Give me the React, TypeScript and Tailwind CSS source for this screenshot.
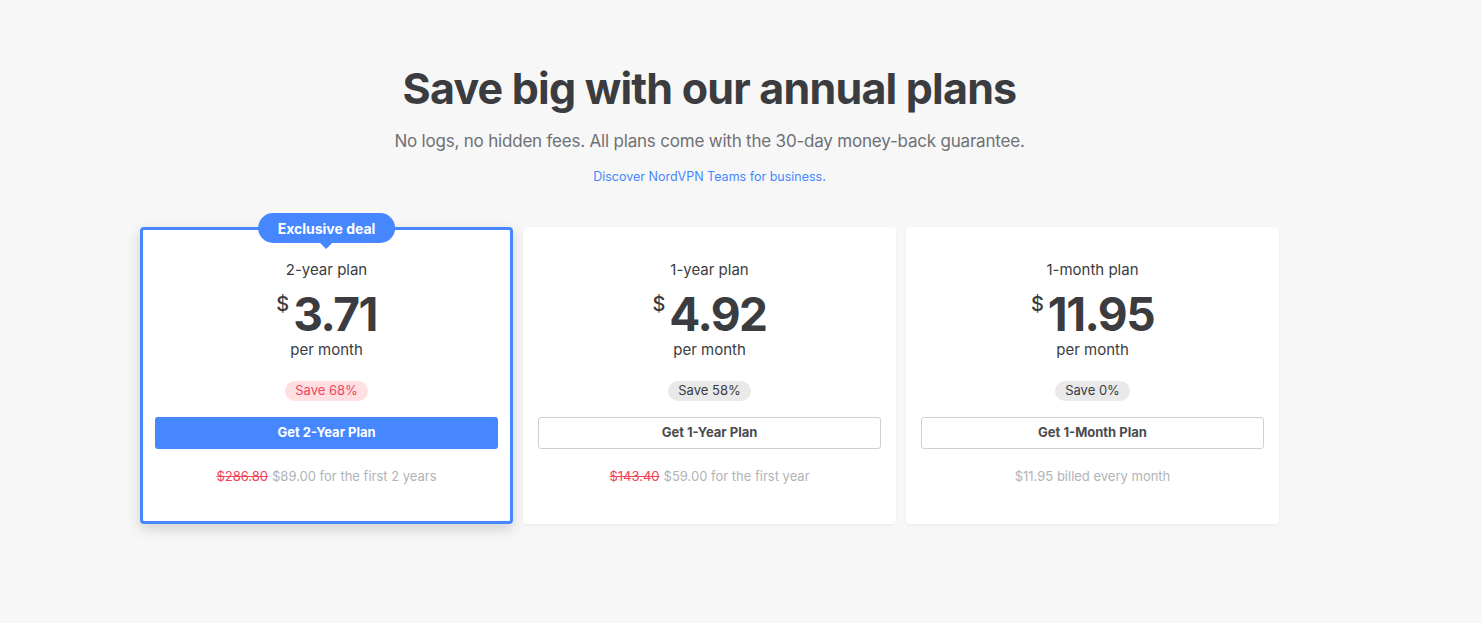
import React from "react";

type Plan = {
  name: string;
  price: string;
  save: string;
  cta: string;
  old?: string;
  rest: string;
  featured?: boolean;
};

const plans: Plan[] = [
  { name: "2-year plan", price: "3.71", save: "Save 68%", cta: "Get 2-Year Plan", old: "$286.80", rest: "$89.00 for the first 2 years", featured: true },
  { name: "1-year plan", price: "4.92", save: "Save 58%", cta: "Get 1-Year Plan", old: "$143.40", rest: "$59.00 for the first year" },
  { name: "1-month plan", price: "11.95", save: "Save 0%", cta: "Get 1-Month Plan", rest: "$11.95 billed every month" },
];

function Card({ p }: { p: Plan }) {
  return (
    <div
      className={
        "relative w-[373px] h-[297px] rounded-[4px] bg-white flex flex-col items-center " +
        (p.featured
          ? "border-[3px] border-[#4687ff] shadow-[0_5px_14px_rgba(0,0,0,0.16)] pt-[30px] px-[12px]"
          : "shadow-[0_1px_3px_rgba(0,0,0,0.06)] pt-[33px] px-[15px]")
      }
    >
      {p.featured && (
        <div className="absolute left-1/2 -translate-x-1/2 top-[-17px] flex flex-col items-center">
          <div className="h-[30px] px-[20px] rounded-full bg-[#4687ff] text-white text-[14px] font-bold flex items-center">
            Exclusive deal
          </div>
          <div className="w-0 h-0 border-l-[6px] border-r-[6px] border-t-[6px] border-l-transparent border-r-transparent border-t-[#4687ff]" />
        </div>
      )}
      <div className="text-[15px] leading-[20px] text-[#3b3c40]">{p.name}</div>
      <div className="flex items-start mt-[12px] h-[44px] text-[#3b3c40]">
        <span className="text-[20px] leading-[20px] font-medium mr-[4px] mt-[2px]">$</span>
        <span className="text-[46px] leading-[44px] font-bold tracking-[-1.5px]">{p.price}</span>
      </div>
      <div className="text-[15px] leading-[20px] text-[#3b3c40] mt-[4px]">per month</div>
      <div
        className={
          "mt-[21px] h-[20px] px-[10px] rounded-full text-[13px] flex items-center " +
          (p.featured ? "bg-[#ffdfe2] text-[#f0465c]" : "bg-[#e9e9ea] text-[#3b3c40]")
        }
      >
        {p.save}
      </div>
      <button
        className={
          "mt-[16px] w-full h-[32px] rounded-[3px] text-[13px] font-bold flex items-center justify-center " +
          (p.featured ? "bg-[#4687ff] text-white" : "bg-white border border-[#cfd0d3] text-[#4a4b4f]")
        }
      >
        {p.cta}
      </button>
      <div className="mt-[17px] text-[13px] leading-[20px] text-[#b1b3b8]">
        {p.old && <span className="line-through text-[#f0465c] mr-[4px]">{p.old}</span>}
        {p.rest}
      </div>
    </div>
  );
}

export default function App() {
  return (
    <div className="min-h-[623px] bg-[#f7f7f7]" style={{ fontFamily: "Inter, 'Noto Sans', sans-serif" }}>
      <div className="w-[1419px] flex flex-col items-center pt-[60px]">
        <h1 className="text-[43px] leading-[56px] font-bold text-[#3b3c40] tracking-[-0.8px]">
          Save big with our annual plans
        </h1>
        <p className="mt-[13px] text-[17px] leading-[24px] text-[#6f7075] tracking-[-0.2px]">
          No logs, no hidden fees. All plans come with the 30-day money-back guarantee.
        </p>
        <a className="mt-[15px] text-[12.5px] leading-[18px] text-[#4687ff]">Discover NordVPN Teams for business.</a>
        <div className="mt-[41px] flex gap-[10px]">
          {plans.map((p) => (
            <Card key={p.name} p={p} />
          ))}
        </div>
      </div>
    </div>
  );
}
